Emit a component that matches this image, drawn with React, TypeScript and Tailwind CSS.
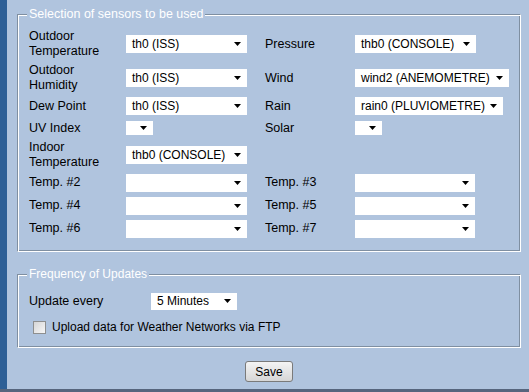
import React from 'react';

function Arrow() {
  return (
    <svg width="7" height="4" viewBox="0 0 7 4" className="shrink-0">
      <path d="M0 0h7L3.5 4z" fill="#000" />
    </svg>
  );
}

function Select({ value = '', className = '' }: { value?: string; className?: string }) {
  return (
    <div className={`flex items-center justify-between bg-white pl-[6px] pr-[6px] text-[12px] text-black ${className}`}>
      <span className="whitespace-nowrap">{value}</span>
      <Arrow />
    </div>
  );
}

function Label({ children }: { children: React.ReactNode }) {
  return <div className="text-[12.5px] leading-[15px] text-black">{children}</div>;
}

const fieldsetClasses =
  'border border-t-[#7f8fa1] border-l-[#7f8fa1] border-r-white border-b-white shadow-[inset_1px_1px_0_#ffffff,inset_-1px_-1px_0_#7f8fa1] pl-[9px]';

export default function App() {
  return (
    <div className="flex h-[392px] w-[529px] flex-col overflow-hidden font-['Liberation_Sans',Arial,sans-serif]">
      <div className="flex flex-1">
        <div className="w-[7px] bg-[#2d5f96]" />
        <div className="flex-1 bg-[#b0c4de] pl-[10px] pr-[8px] pt-[7px]">
          <fieldset className={`${fieldsetClasses} pt-[5px] pb-[11px]`}>
            <legend className="bg-[#b0c4de] px-[2px] text-[12.5px] leading-[15px] text-white">
              Selection of sensors to be used
            </legend>
            <div className="grid grid-cols-[97px_139px_90px_1fr] grid-rows-[34px_34px_22px_22px_32px_23px_23px_23px] items-center pl-[2px]">
              <Label>Outdoor<br />Temperature</Label>
              <Select value="th0 (ISS)" className="h-[18px] w-[121px]" />
              <Label>Pressure</Label>
              <Select value="thb0 (CONSOLE)" className="h-[18px] w-[121px]" />

              <Label>Outdoor<br />Humidity</Label>
              <Select value="th0 (ISS)" className="h-[18px] w-[121px]" />
              <Label>Wind</Label>
              <Select value="wind2 (ANEMOMETRE)" className="h-[18px] w-[154px]" />

              <Label>Dew Point</Label>
              <Select value="th0 (ISS)" className="h-[18px] w-[121px]" />
              <Label>Rain</Label>
              <Select value="rain0 (PLUVIOMETRE)" className="h-[18px] w-[148px]" />

              <Label>UV Index</Label>
              <Select className="h-[14px] w-[27px]" />
              <Label>Solar</Label>
              <Select className="h-[14px] w-[27px]" />

              <Label>Indoor<br />Temperature</Label>
              <Select value="thb0 (CONSOLE)" className="h-[18px] w-[121px]" />
              <div />
              <div />

              <Label>Temp. #2</Label>
              <Select className="h-[18px] w-[121px]" />
              <Label>Temp. #3</Label>
              <Select className="h-[18px] w-[120px]" />

              <Label>Temp. #4</Label>
              <Select className="h-[18px] w-[121px]" />
              <Label>Temp. #5</Label>
              <Select className="h-[18px] w-[120px]" />

              <Label>Temp. #6</Label>
              <Select className="h-[18px] w-[121px]" />
              <Label>Temp. #7</Label>
              <Select className="h-[18px] w-[120px]" />
            </div>
          </fieldset>

          <fieldset className={`${fieldsetClasses} mt-[15px] pt-[8px] pb-[9px]`}>
            <legend className="bg-[#b0c4de] px-[2px] text-[12px] leading-[15px] text-white">
              Frequency of Updates
            </legend>
            <div className="flex h-[22px] items-center pl-[2px]">
              <div className="w-[122px]">
                <Label>Update every</Label>
              </div>
              <Select value="5 Minutes" className="h-[17px] w-[86px]" />
            </div>
            <div className="mt-[4px] flex h-[22px] items-center pl-[6px]">
              <div className="h-[13px] w-[13px] border border-[#8e8f8f] bg-linear-to-br from-[#d6d6d6] to-[#f7f7f7]" />
              <span className="ml-[6px] text-[12px] text-black">Upload data for Weather Networks via FTP</span>
            </div>
          </fieldset>

          <div className="mt-[13px] flex justify-center">
            <button className="h-[21px] w-[48px] rounded-[3px] border border-[#7a7a7a] bg-linear-to-b from-[#f4f4f4] to-[#d6d6d6] text-[12px] text-black">
              Save
            </button>
          </div>
        </div>
      </div>
      <div className="h-[3px] bg-[#56657d]" />
    </div>
  );
}
